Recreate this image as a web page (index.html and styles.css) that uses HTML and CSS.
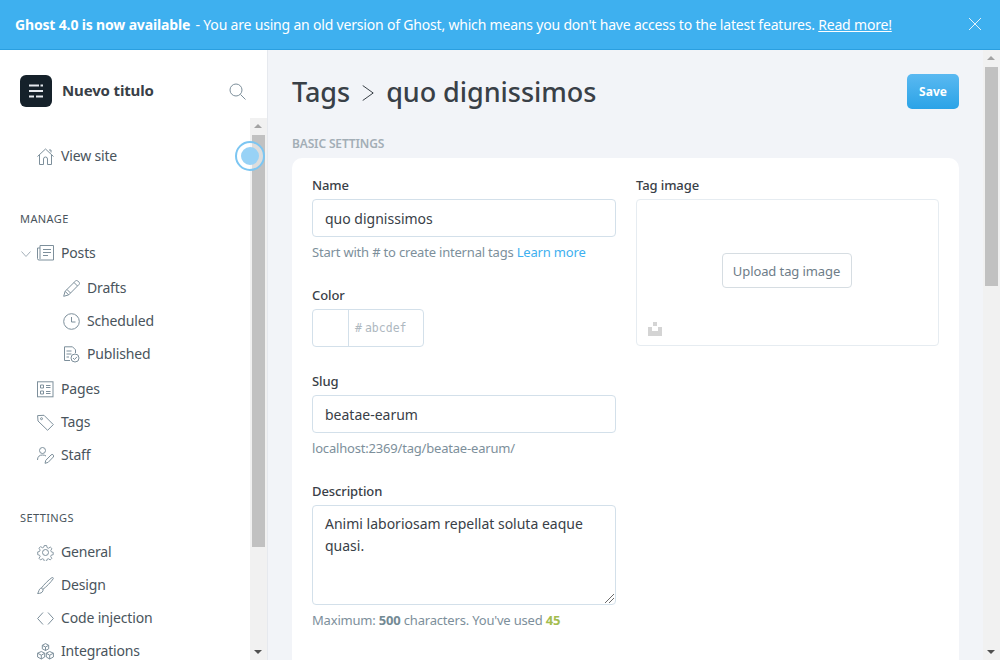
FILE: index.html
```html
<!DOCTYPE html>
<html lang="en">
<head>
<meta charset="utf-8">
<title>Tags - quo dignissimos</title>
<link rel="stylesheet" href="styles.css">
</head>
<body>
<div class="banner">
  <p class="banner-text"><strong>Ghost 4.0 is now available</strong> - You are using an old version of Ghost, which means you don't have access to the latest features. <a href="#">Read more!</a></p>
  <svg class="banner-close" viewBox="0 0 14 14"><path d="M1 1l12 12M13 1L1 13"/></svg>
</div>
<div class="app">
  <aside class="sidebar">
    <div class="side-head">
      <span class="logo"><svg viewBox="0 0 14 14"><path d="M0 1.500h10M11.500 1.500h2.500M0 7h14M0 12.500h5M7 12.500h7"/></svg></span>
      <span class="site-title">Nuevo titulo</span>
      <svg class="search" viewBox="0 0 17 17"><circle cx="7" cy="7" r="6"/><path d="M11.500 11.500l5 5"/></svg>
    </div>
    <div class="side-body">
      <nav class="nav">
        <a class="row view" href="#"><svg class="ico" viewBox="0 0 17 17"><path d="M.5 8.500L8.500 1l8 7.500M2.500 7v9.500h4V11a2 2 0 0 1 4 0v5.500h4V7M12 2h2v2.500"/></svg>View site</a>
        <h3 class="sect">MANAGE</h3>
        <a class="row posts" href="#"><svg class="chev" viewBox="0 0 10 6"><path d="M.5.500L5 5.500 9.500.500"/></svg><svg class="ico" viewBox="0 0 17 17"><path d="M3 14V.5h13.500V15H2A1.500 1.500 0 0 1 .5 13.500V3H3M6 4.500h8M6 7.500h8M6 10.500h5"/></svg>Posts</a>
        <div class="sub">
          <a class="row" href="#"><svg class="ico" viewBox="0 0 17 17"><path d="M.7 16.300l1.400-5L12.600.9a1.500 1.500 0 0 1 2.100 0l1.400 1.400a1.500 1.500 0 0 1 0 2.100L5.700 14.900zM2.100 11.300l3.600 3.600M11 2.500l3.500 3.500M4 9.500l3.500 3.500"/></svg>Drafts</a>
          <a class="row" href="#"><svg class="ico" viewBox="0 0 17 17"><circle cx="8.500" cy="8.500" r="7.800"/><path d="M8.500 4v5h4"/></svg>Scheduled</a>
          <a class="row" href="#"><svg class="ico" viewBox="0 0 17 17"><path d="M7 14.500H1.500V.8h8l3 3V7M3.500 5h5M3.500 8h5M3.500 11h2.500"/><circle cx="12" cy="12" r="4"/><path d="M10 12l1.500 1.500L14 10.800"/></svg>Published</a>
        </div>
        <a class="row pages" href="#"><svg class="ico" viewBox="0 0 17 17"><rect x=".5" y=".8" width="15.500" height="15"/><path d="M3.500 4h3v3h-3zM3.500 10h3v3h-3zM9 4.500h4.500M9 6.500h4.500M9 10.500h4.500M9 12.500h4.500"/></svg>Pages</a>
        <a class="row" href="#"><svg class="ico" viewBox="0 0 17 17"><path d="M.6 1.600L7 1.300l9.300 9.300-5.700 5.700L1 7z"/><circle cx="4.500" cy="4.700" r="1"/></svg>Tags</a>
        <a class="row" href="#"><svg class="ico" viewBox="0 0 17 17"><circle cx="5.500" cy="3.500" r="3"/><path d="M.5 13c0-3.500 2-5 5-5 1.500 0 2.500.3 3.500 1M8 16.300l.8-3L14 8a1.200 1.200 0 0 1 2.300 2l-5.200 5.400z"/></svg>Staff</a>
        <h3 class="sect">SETTINGS</h3>
        <a class="row" href="#"><svg class="ico" viewBox="0 0 17 17"><circle cx="8.500" cy="8.500" r="3"/><path d="M7.200.8h2.600l.5 2.300 1.600.7 2-1.300 1.800 1.800-1.300 2 .7 1.600 2 .5v2.600l-2.200.5-.6 1.500 1.300 2-1.800 1.800-2-1.300-1.600.7-.5 2.200H7.200l-.5-2.200-1.600-.7-2 1.300-1.800-1.800 1.300-2-.7-1.500-2-.5V7.900l2-.5.7-1.600-1.300-2 1.800-1.800 2 1.300 1.600-.7z" transform="translate(.8 .8) scale(.9)"/></svg>General</a>
        <a class="row" href="#"><svg class="ico" viewBox="0 0 17 17"><path d="M.6 16.500c2.500 0 4.900-.6 5.400-3 .3-1.400-1-2.600-2.300-2.200C1.800 12 2 14.800.6 16.500zM4.300 11.200C7 7.500 11.500 3 15 .6c.9-.4 1.600.3 1.200 1.200-2.400 3.500-6.800 8-10.500 10.700"/></svg>Design</a>
        <a class="row" href="#"><svg class="ico" viewBox="0 0 17 17"><path d="M6 2.500L.6 8.500 6 14.500M11 2.500l5.400 6-5.400 6"/></svg>Code injection</a>
        <a class="row" href="#"><svg class="ico" viewBox="0 0 17 17"><path d="M8.500.6l3.200 1.700v3.500L8.500 7.500 5.300 5.800V2.300zM5.300 2.300l3.200 1.700 3.200-1.700M8.500 4v3.500M4.300 8.500l3.400 1.700v3.800l-3.400 2-3.700-2v-3.800zM.6 10.200l3.700 2 3.400-2M4.300 12.200V16M12.700 8.500l3.700 1.700v3.800l-3.700 2-3.400-2v-3.800zM9.300 10.200l3.400 2 3.700-2M12.700 12.200V16"/></svg>Integrations</a>
      </nav>
      <div class="bar bar-side">
        <span class="arrow up"></span>
        <span class="thumb"></span>
        <span class="arrow down"></span>
      </div>
      <span class="pulse"><span class="pulse-dot"></span></span>
    </div>
  </aside>
  <main class="main">
    <div class="content">
      <header class="title-row">
        <h1 class="title"><span>Tags</span><svg class="crumb" viewBox="0 0 12 16"><path d="M.7.5l10.500 7.500L.7 15.500"/></svg><span>quo dignissimos</span></h1>
        <button class="save">Save</button>
      </header>
      <h2 class="sect-head">BASIC SETTINGS</h2>
      <section class="card">
        <div class="col">
          <div class="field">
            <label class="lbl">Name</label>
            <div class="input">quo dignissimos</div>
            <p class="hint">Start with # to create internal tags <a href="#">Learn more</a></p>
          </div>
          <div class="field">
            <label class="lbl">Color</label>
            <div class="color"><span class="swatch"></span><span class="hex"><i>#</i>abcdef</span></div>
          </div>
          <div class="field slug">
            <label class="lbl">Slug</label>
            <div class="input">beatae-earum</div>
            <p class="hint">localhost:2369/tag/beatae-earum/</p>
          </div>
          <div class="field">
            <label class="lbl">Description</label>
            <div class="input area">Animi laboriosam repellat soluta eaque quasi.<svg class="grip" viewBox="0 0 9 9"><path d="M0 9l9-9M4 9l5-5"/></svg></div>
            <p class="hint">Maximum: <b>500</b> characters. You've used <b class="ok">45</b></p>
          </div>
        </div>
        <div class="col">
          <label class="lbl">Tag image</label>
          <div class="upload">
            <button class="up-btn">Upload tag image</button>
            <svg class="up-ico" viewBox="0 0 14 14"><path d="M5 0h4v4H5zM0 5h4v4h6V5h4v9H0z"/></svg>
          </div>
        </div>
      </section>
    </div>
    <div class="bar bar-main">
      <span class="arrow up"></span>
      <span class="thumb"></span>
      <span class="arrow down"></span>
    </div>
  </main>
</div>
</body>
</html>
```

FILE: styles.css
```css
* { box-sizing: border-box; }
html, body { margin: 0; height: 100%; overflow: hidden; }
body { font-family: "Noto Sans", "Open Sans", sans-serif; color: #15212a; background: #fff; display: flex; flex-direction: column; height: 660px; }
a { text-decoration: none; color: inherit; }
h1, h2, h3, p { margin: 0; }

.banner { flex: none; height: 50px; background: #3eb0ef; border-bottom: 1px solid #2a9fe0; display: flex; align-items: center; justify-content: space-between; padding: 0 18px 0 15px; color: #fff; font-size: 14px; }
.banner-text { white-space: nowrap; letter-spacing: -.19px; }
.banner-text strong { letter-spacing: -.16px; margin-right: 2px; }
.banner-text a { text-decoration: underline; }
.banner-close { width: 14px; height: 14px; fill: none; stroke: #e4f3fc; stroke-width: 1; margin-top: -2px; }

.app { flex: 1; display: flex; min-height: 0; }

.sidebar { flex: none; width: 268px; border-right: 1px solid #e6e9ee; display: flex; flex-direction: column; background: #fff; }
.side-head { flex: none; height: 68px; display: flex; align-items: center; padding: 0 21px 0 20px; }
.logo { width: 32px; height: 32px; border-radius: 6px; background: #15212a; display: flex; align-items: center; justify-content: center; margin-top: 14px; }
.logo svg { width: 14px; height: 14px; fill: none; stroke: #e6e9ee; stroke-width: 2; }
.site-title { flex: 1; margin: 12px 0 0 10px; font-size: 15px; font-weight: 700; color: #394047; letter-spacing: -.15px; }
.search { width: 17px; height: 17px; fill: none; stroke: #7d8f9b; stroke-width: 1; margin-top: 14px; }

.side-body { flex: 1; min-height: 0; display: flex; position: relative; }
.nav { flex: 1; min-width: 0; overflow: hidden; padding-top: 22px; }
.row { height: 33px; display: flex; align-items: center; padding: 0 0 2px 37px; font-size: 14px; letter-spacing: -.16px; color: #49545c; position: relative; }
.ico { width: 17px; height: 17px; flex: none; margin: 2px 7px 0 0; fill: none; stroke: #7d8f9b; stroke-width: 1; }
.chev { position: absolute; left: 21px; top: 14px; width: 10px; height: 6px; fill: none; stroke: #a4b0b9; stroke-width: 1; }
.sect { margin: 36px 0 8px 20px; height: 20px; line-height: 20px; font-size: 11px; font-weight: 400; letter-spacing: .4px; color: #49545c; }
.sub { margin: 2px 0; }
.sub .row { padding-left: 63px; }

.bar { flex: none; width: 17px; background: #f1f1f1; display: flex; flex-direction: column; position: relative; }
.thumb { display: block; background: #c1c1c1; margin: 0 2px; }
.arrow { display: block; flex: none; height: 17px; position: relative; }
.arrow::after { content: ""; position: absolute; left: 4px; border-left: 4px solid transparent; border-right: 4px solid transparent; }
.arrow.up::after { top: 6px; border-bottom: 4px solid #a3a3a3; }
.arrow.down::after { top: 7px; border-top: 4px solid #505050; }
.bar-side .thumb { height: 412px; }
.bar-side .arrow.down { margin-top: auto; }

.pulse { position: absolute; left: 235px; top: 23px; width: 30px; height: 30px; border-radius: 50%; border: 2px solid #7cc6f2; background: rgba(255,255,255,.45); display: flex; align-items: center; justify-content: center; }
.pulse-dot { width: 18px; height: 18px; border-radius: 50%; background: #98d2f6; }

.main { flex: 1; min-width: 0; display: flex; background: #f2f4f8; }
.content { flex: 1; min-width: 0; overflow: hidden; padding: 0 24px 0 24px; }
.bar-main .thumb { height: 219px; }
.bar-main .arrow.down { margin-top: auto; }

.title-row { height: 84px; display: flex; align-items: center; justify-content: space-between; }
.title { display: flex; align-items: center; font-size: 27px; font-weight: 500; letter-spacing: -.05px; color: #394047; line-height: 1; margin-bottom: 1px; }
.crumb { width: 12px; height: 16px; margin: 3px 12px 0 12px; fill: none; stroke: #394047; stroke-width: 1; }
.save { width: 52px; height: 35px; margin-bottom: 2px; border: 0; border-radius: 5px; background: linear-gradient(#5ab9f1, #2ba3e7); color: #fff; font: 700 12px "Noto Sans", sans-serif; padding: 0; }
.sect-head { font-size: 12px; font-weight: 600; color: #a3aeb6; line-height: 18px; margin-top: 1px; margin-bottom: 5px; letter-spacing: -.15px; }
.card { background: #fff; border-radius: 10px; padding: 18px 20px 0; height: 560px; display: grid; grid-template-columns: 304px 303px; column-gap: 20px; }
.col { display: flex; flex-direction: column; align-items: stretch; }
.lbl { display: block; height: 23px; line-height: 18px; font-size: 13px; font-weight: 500; letter-spacing: -.1px; color: #394047; }
.input { height: 38px; border: 1px solid #d3e0ea; border-radius: 4px; padding: 0 12px; display: flex; align-items: center; font-size: 14px; color: #394047; background: #fff; }
.hint { margin-top: 6px; line-height: 18px; font-size: 13px; letter-spacing: -.19px; color: #7d8f9b; }
.hint a { color: #3eb0ef; }
.hint b { font-weight: 700; color: #738a94; }
.hint b.ok { color: #a4bd4e; }
.field { margin-bottom: 25px; }
.color { width: 112px; height: 38px; border: 1px solid #d3e0ea; border-radius: 4px; display: flex; background: #fff; }
.swatch { width: 36px; border-right: 1px solid #d3e0ea; }
.hex { flex: 1; display: flex; align-items: center; padding-left: 6px; font: 11.5px "DejaVu Sans Mono", monospace; color: #aeb8bf; }
.hex i { font-style: normal; margin-right: 3px; }
.input.area { height: 100px; display: block; padding: 7px 12px; line-height: 22px; position: relative; }
.grip { position: absolute; right: 1px; bottom: 1px; width: 9px; height: 9px; fill: none; stroke: #6a6a6a; stroke-width: 1; }
.upload { height: 147px; border: 1px solid #e6ecf1; border-radius: 4px; padding: 0 2px 4px 0; position: relative; display: flex; align-items: center; justify-content: center; background: #fff; }
.up-btn { width: 130px; height: 35px; border: 1px solid #d6dde2; border-radius: 4px; background: #fff; font: 13px "Noto Sans", sans-serif; letter-spacing: -.1px; color: #6e7d88; padding: 0; }
.up-ico { position: absolute; left: 11px; bottom: 9px; width: 14px; height: 14px; fill: #d4d4d4; }
```
